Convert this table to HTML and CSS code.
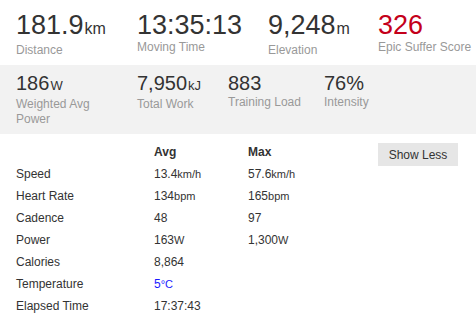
FILE: index.html
```html
<!DOCTYPE html>
<html>
<head>
<meta charset="utf-8">
<link rel="stylesheet" href="styles.css">
</head>
<body>
<section class="stats-main">
  <div class="stat"><div class="big">181.9<abbr>km</abbr></div><div class="label">Distance</div></div>
  <div class="stat"><div class="big">13:35:13</div><div class="label">Moving Time</div></div>
  <div class="stat"><div class="big">9,248<abbr>m</abbr></div><div class="label">Elevation</div></div>
  <div class="stat"><div class="big red">326</div><div class="label">Epic Suffer Score</div></div>
</section>
<section class="stats-more">
  <div class="stat"><div class="mid">186<abbr>W</abbr></div><div class="label2">Weighted Avg<br>Power</div></div>
  <div class="stat"><div class="mid">7,950<abbr>kJ</abbr></div><div class="label2">Total Work</div></div>
  <div class="stat"><div class="mid">883</div><div class="label2">Training Load</div></div>
  <div class="stat"><div class="mid">76%</div><div class="label2">Intensity</div></div>
</section>
<section class="details">
  <div class="grid">
    <div></div><div class="head">Avg</div><div class="head">Max</div>
    <div>Speed</div><div>13.4<abbr>km/h</abbr></div><div>57.6<abbr>km/h</abbr></div>
    <div>Heart Rate</div><div>134<abbr>bpm</abbr></div><div>165<abbr>bpm</abbr></div>
    <div>Cadence</div><div>48</div><div>97</div>
    <div>Power</div><div>163<abbr>W</abbr></div><div>1,300<abbr>W</abbr></div>
    <div>Calories</div><div>8,864</div><div></div>
    <div>Temperature</div><div class="blue">5<abbr>°C</abbr></div><div></div>
    <div>Elapsed Time</div><div>17:37:43</div><div></div>
  </div>
  <button class="btn">Show Less</button>
</section>
</body>
</html>
```
FILE: styles.css
```css
html, body {
  margin: 0;
  padding: 0;
  background: #fff;
  font-family: "Liberation Sans", Arial, sans-serif;
  color: #333;
}
abbr {
  text-decoration: none;
}
.stats-main {
  display: grid;
  grid-template-columns: 121px 131px 110px auto;
  padding: 10px 0 0 16px;
  height: 65px;
  box-sizing: border-box;
}
.big {
  font-size: 27px;
  line-height: 31px;
  color: #333;
}
.big abbr {
  font-size: 16px;
  margin-left: 1px;
}
.red {
  color: #c4001a;
}
.label {
  font-size: 12px;
  line-height: 13px;
  color: #999;
}
.stats-more {
  display: grid;
  grid-template-columns: 121px 91px 96px auto;
  padding: 7px 0 0 16px;
  height: 69px;
  box-sizing: border-box;
  background: #f2f2f2;
}
.mid {
  font-size: 20px;
  line-height: 23px;
  color: #333;
}
.mid abbr {
  font-size: 13px;
  margin-left: 1px;
}
.label2 {
  font-size: 12px;
  line-height: 15px;
  color: #999;
}
.details {
  display: flex;
  align-items: flex-start;
  padding: 7px 0 0 16px;
}
.grid {
  display: grid;
  grid-template-columns: 138px 94px 130px;
  grid-auto-rows: 22px;
  font-size: 12px;
  line-height: 22px;
  color: #333;
}
.grid abbr {
  font-size: 11px;
}
.head {
  font-weight: bold;
}
.blue {
  color: #1a1aff;
}
.btn {
  margin-top: 2px;
  width: 80px;
  height: 23px;
  padding: 0;
  border: none;
  background: #e6e6e6;
  font-family: "Liberation Sans", Arial, sans-serif;
  font-size: 12px;
  color: #333;
}
```
